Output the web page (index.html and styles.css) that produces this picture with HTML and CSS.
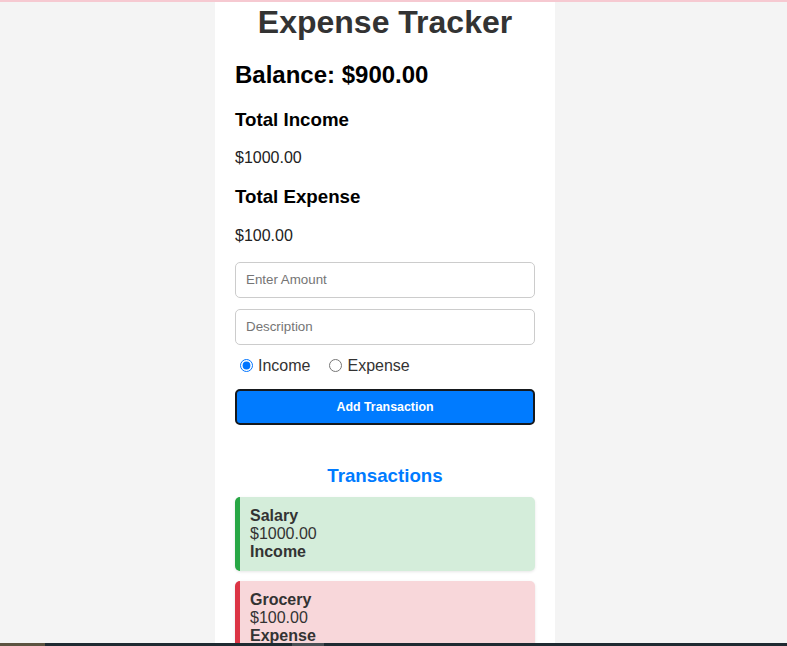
FILE: index.html
```html
<!DOCTYPE html>
<html lang="en">
<head>
<meta charset="utf-8">
<title>Expense Tracker</title>
<link rel="stylesheet" href="styles.css">
</head>
<body>
<div class="top-strip"></div>
<div class="page">
  <div class="container">
    <h1 class="title">Expense Tracker</h1>
    <h2 class="balance">Balance: $900.00</h2>
    <h3 class="stat-label">Total Income</h3>
    <p class="stat-value">$1000.00</p>
    <h3 class="stat-label">Total Expense</h3>
    <p class="stat-value">$100.00</p>
    <form class="form">
      <input class="field" type="number" placeholder="Enter Amount">
      <input class="field" type="text" placeholder="Description">
      <div class="radios">
        <label class="radio-label"><input class="radio" type="radio" name="type" checked>Income</label>
        <label class="radio-label"><input class="radio" type="radio" name="type">Expense</label>
      </div>
      <button class="add-btn" type="button">Add Transaction</button>
    </form>
    <h3 class="list-title">Transactions</h3>
    <div class="list">
      <div class="item income">
        <div class="item-name">Salary</div>
        <div class="item-amount">$1000.00</div>
        <div class="item-type">Income</div>
      </div>
      <div class="item expense">
        <div class="item-name">Grocery</div>
        <div class="item-amount">$100.00</div>
        <div class="item-type">Expense</div>
      </div>
    </div>
  </div>
</div>
<div class="taskbar"><span class="tb-left"></span><span class="tb-mid"></span></div>
</body>
</html>
```

FILE: styles.css
```css
html, body {
  overflow: hidden;
}
body {
  margin: 0;
  background: #f4f4f4;
  font-family: "Liberation Sans", Arial, sans-serif;
  color: #333;
}
.top-strip {
  position: fixed;
  top: 0;
  left: 0;
  right: 0;
  height: 2px;
  background: #f6c9d1;
  z-index: 5;
}
.page {
  padding-right: 17px;
}
.container {
  width: 300px;
  margin: 0 auto;
  padding: 4px 20px 20px;
  background: #fff;
}
.title {
  margin: 0;
  font-size: 32px;
  font-weight: bold;
  text-align: center;
  color: #333;
}
.balance {
  margin: 19.9px 0 19.9px;
  font-size: 24px;
  color: #000;
}
.stat-label {
  margin: 18.7px 0 18.7px;
  font-size: 18.72px;
  color: #000;
}
.stat-value {
  margin: 16px 0;
  font-size: 16px;
  color: #222;
}
.form {
  margin-top: 17px;
  display: flex;
  flex-direction: column;
}
.field {
  display: block;
  box-sizing: border-box;
  width: 100%;
  height: 36px;
  padding: 0 10px;
  border: 1px solid #ccc;
  border-radius: 5px;
  font-family: "Liberation Sans", Arial, sans-serif;
  font-size: 13.33px;
  color: #333;
  margin: 0 0 11px;
}
.field::placeholder {
  color: #757575;
}
.radios {
  display: flex;
  align-items: baseline;
  height: 19px;
  margin: 1px 0 13px;
  font-size: 16px;
}
.radio-label {
  display: inline-flex;
  align-items: center;
  margin-right: 14px;
  color: #333;
}
.radio {
  width: 13px;
  height: 13px;
  margin: 0 5px 0 5px;
  accent-color: #0075ff;
}
.add-btn {
  box-sizing: border-box;
  width: 100%;
  height: 36px;
  background: #007bff;
  color: #fff;
  border: 2px solid #16191d;
  border-radius: 5px;
  font-family: "Liberation Sans", Arial, sans-serif;
  font-size: 12.4px;
  font-weight: bold;
}
.list-title {
  margin: 40px 0 10px;
  font-size: 18.72px;
  text-align: center;
  color: #007bff;
}
.list {
  display: flex;
  flex-direction: column;
  gap: 10px;
}
.item {
  padding: 10px;
  border-left: 5px solid;
  border-radius: 5px;
  box-shadow: 0 1px 3px rgba(0, 0, 0, 0.1);
  font-size: 16px;
  line-height: 18px;
  color: #333;
}
.item.income {
  background: #d4edda;
  border-left-color: #28a745;
}
.item.expense {
  background: #f8d7da;
  border-left-color: #dc3545;
}
.item-name,
.item-type {
  font-weight: bold;
}
.taskbar {
  position: fixed;
  left: 0;
  right: 0;
  bottom: 0;
  height: 3px;
  background: #1f2a31;
  display: flex;
  z-index: 5;
}
.tb-left {
  width: 45px;
  background: #5b5340;
}
.tb-mid {
  width: 32px;
  margin-left: 247px;
  background: #4a4f54;
}
```
